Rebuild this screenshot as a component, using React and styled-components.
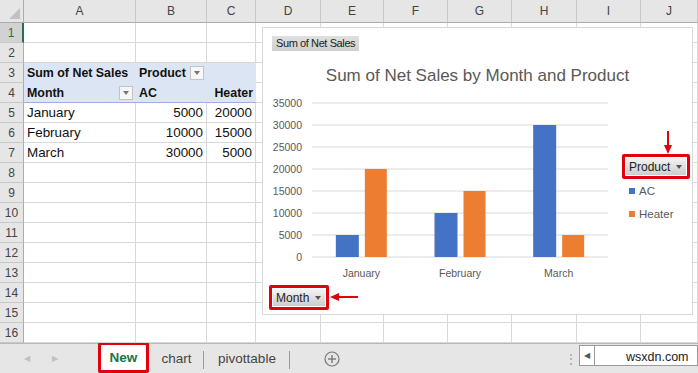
import React from "react";
import styled, { createGlobalStyle } from "styled-components";

const GlobalStyle = createGlobalStyle`
  html, body { margin: 0; padding: 0; background: #fff; }
  body { font-family: "Liberation Sans", Arial, sans-serif; overflow: hidden; }
`;

const COLS = [24, 112, 71, 49, 65, 63, 64, 64, 65, 64, 57];
const LETTERS = ["A", "B", "C", "D", "E", "F", "G", "H", "I", "J"];

const Page = styled.div`
  width: 698px;
  height: 373px;
  display: flex;
  flex-direction: column;
  overflow: hidden;
`;

const Sheet = styled.div`
  position: relative;
  display: grid;
  grid-template-columns: ${COLS.map((c) => c + "px").join(" ")};
  grid-template-rows: 23px repeat(16, 20px);
  height: 343px;
`;

const Corner = styled.div`
  background: #e6e6e6;
  border-right: 1px solid #ababab;
  border-bottom: 1px solid #ababab;
  box-sizing: border-box;
  position: relative;
  &::after {
    content: "";
    position: absolute;
    right: 3px;
    bottom: 3px;
    border-left: 11px solid transparent;
    border-bottom: 11px solid #c2c2c2;
  }
`;

const ColHead = styled.div`
  background: #e6e6e6;
  border-right: 1px solid #c8c8c8;
  border-bottom: 1px solid #ababab;
  box-sizing: border-box;
  display: flex;
  align-items: center;
  justify-content: center;
  font-size: 12px;
  color: #444;
`;

const RowHead = styled.div`
  background: ${(p) => (p.$active ? "#d2d2d2" : "#e6e6e6")};
  border-right: ${(p) => (p.$active ? "2px solid #217346" : "1px solid #ababab")};
  border-bottom: 1px solid #c8c8c8;
  box-sizing: border-box;
  display: flex;
  align-items: center;
  justify-content: center;
  font-size: 12px;
  color: ${(p) => (p.$active ? "#217346" : "#444")};
`;

const Cell = styled.div`
  box-sizing: border-box;
  border-right: ${(p) => (p.$pivot ? "none" : "1px solid #d8d8d8")};
  border-bottom: ${(p) =>
    p.$pivotEnd ? "1px solid #9bb3dc" : p.$pivot ? "none" : "1px solid #d8d8d8"};
  background: ${(p) => (p.$pivot ? "#dce5f3" : "#fff")};
  display: flex;
  align-items: center;
  justify-content: ${(p) => (p.$right ? "flex-end" : "flex-start")};
  gap: 4px;
  padding: 0 3px;
  font-size: ${(p) => (p.$bold ? "12.4px" : "13.4px")};
  font-weight: ${(p) => (p.$bold ? 700 : 400)};
  color: #111;
  white-space: nowrap;
  overflow: visible;
`;

const Spacer = styled.span`
  flex: 1;
`;

const FilterBtn = styled.span`
  width: 14px;
  height: 14px;
  box-sizing: border-box;
  border: 1px solid #c3c3c3;
  background: #f7f7f7;
  display: inline-flex;
  align-items: center;
  justify-content: center;
  &::after {
    content: "";
    border-left: 3.5px solid transparent;
    border-right: 3.5px solid transparent;
    border-top: 4px solid #777;
  }
`;

const Chart = styled.div`
  position: absolute;
  left: 262px;
  top: 27px;
  width: 431px;
  height: 288px;
  box-sizing: border-box;
  border: 1px solid #d9d9d9;
  background: #fff;
  padding: 8px 0 5px 0;
  display: flex;
  flex-direction: column;
`;

const FieldLabel = styled.div`
  align-self: flex-start;
  margin-left: 9px;
  height: 15px;
  padding: 0 4px;
  background: linear-gradient(#e0e0e0, #cfcfcf);
  font-size: 11px;
  line-height: 15px;
  color: #222;
  letter-spacing: -0.4px;
`;

const Title = styled.div`
  margin-top: 14px;
  height: 22px;
  line-height: 22px;
  text-align: center;
  font-size: 17px;
  color: #595959;
`;

const Body = styled.div`
  display: flex;
  height: 196px;
`;

const Legend = styled.div`
  margin-left: 9px;
  margin-top: 67px;
  display: flex;
  flex-direction: column;
`;

const RedBox = styled.div`
  position: relative;
  align-self: flex-start;
  border: 3px solid #e1000c;
  border-radius: 2px;
  padding: 1px;
  display: flex;
`;

const DropBtn = styled.div`
  height: 17px;
  padding: 0 4px 0 3px;
  display: flex;
  align-items: center;
  gap: 6px;
  background: linear-gradient(#f4f4f4, #cdcdcd);
  font-size: 12px;
  color: #222;
  &::after {
    content: "";
    border-left: 3.5px solid transparent;
    border-right: 3.5px solid transparent;
    border-top: 4px solid #555;
  }
`;

const LegendItem = styled.div`
  display: flex;
  align-items: center;
  gap: 4px;
  height: 23px;
  padding-left: 7px;
  font-size: 11.5px;
  color: #595959;
`;

const Swatch = styled.span`
  width: 6px;
  height: 6px;
  background: ${(p) => p.$color};
`;

const MonthRow = styled.div`
  margin-top: 2px;
  margin-left: 6px;
  display: flex;
`;

const Arrow = styled.svg`
  position: absolute;
  overflow: visible;
`;

const TabBar = styled.div`
  height: 30px;
  box-sizing: border-box;
  background: #e6e6e6;
  border-top: 1px solid #b8b8b8;
  display: flex;
  align-items: stretch;
  font-size: 13.5px;
  color: #444;
`;

const NavArrows = styled.div`
  width: 98px;
  display: flex;
  align-items: center;
  padding-left: 24px;
  gap: 22px;
  box-sizing: border-box;
  color: #c0c0c0;
  font-size: 8px;
`;

const ActiveTab = styled.div`
  width: 51px;
  margin-top: -2px;
  box-sizing: border-box;
  border: 3px solid #e1000c;
  border-radius: 2px;
  background: #fff;
  display: flex;
  align-items: center;
  justify-content: center;
  font-weight: 700;
  color: #217346;
`;

const Tab = styled.div`
  width: ${(p) => p.$w}px;
  display: flex;
  align-items: center;
  justify-content: center;
  position: relative;
  &::after {
    content: "";
    position: absolute;
    right: 0;
    top: 7px;
    bottom: 4px;
    width: 1px;
    background: #9a9a9a;
  }
`;

const AddTab = styled.div`
  width: 84px;
  display: flex;
  align-items: center;
  justify-content: center;
`;

const Dots = styled.div`
  margin-left: auto;
  width: 16px;
  display: flex;
  align-items: center;
  justify-content: center;
  color: #a8a8a8;
  font-size: 14px;
`;

const Scroll = styled.div`
  width: 119px;
  height: 21px;
  margin-top: 1px;
  box-sizing: border-box;
  border: 1px solid #9a9a9a;
  background: #fff;
  display: flex;
  overflow: hidden;
`;

const ScrollBtn = styled.div`
  width: 14px;
  border-right: 1px solid #9a9a9a;
  display: flex;
  align-items: center;
  justify-content: center;
  color: #555;
  font-size: 8px;
`;

const Watermark = styled.div`
  padding-left: 31px;
  display: flex;
  align-items: flex-end;
  font-size: 12.5px;
  line-height: 15px;
  color: #222;
`;

const DATA = {
  3: [
    { t: "Sum of Net Sales", bold: true, pivot: true },
    { t: "Product", bold: true, pivot: true, filter: true },
    { t: "", pivot: true },
  ],
  4: [
    { t: "Month", bold: true, pivot: true, end: true, filter: true, spread: true },
    { t: "AC", bold: true, pivot: true, end: true },
    { t: "Heater", bold: true, pivot: true, end: true, right: true },
  ],
  5: [{ t: "January" }, { t: "5000", right: true }, { t: "20000", right: true }],
  6: [{ t: "February" }, { t: "10000", right: true }, { t: "15000", right: true }],
  7: [{ t: "March" }, { t: "30000", right: true }, { t: "5000", right: true }],
};

const SERIES = [
  { name: "January", ac: 5000, heater: 20000 },
  { name: "February", ac: 10000, heater: 15000 },
  { name: "March", ac: 30000, heater: 5000 },
];

const PlotSvg = () => {
  const x0 = 49;
  const x1 = 345;
  const top = 16;
  const step = 22;
  const base = top + step * 7;
  const catW = (x1 - x0) / 3;
  const h = (v) => (v / 35000) * (step * 7);
  return (
    <svg width="350" height="196" viewBox="0 0 350 196">
      {[0, 1, 2, 3, 4, 5, 6, 7].map((i) => {
        const y = top + i * step;
        return (
          <g key={i}>
            <line x1={x0} x2={x1} y1={y} y2={y} stroke="#d9d9d9" strokeWidth="1" />
            <text
              x="39"
              y={y + 3.8}
              textAnchor="end"
              fontSize="10.5"
              fill="#595959"
              fontFamily="Liberation Sans, Arial, sans-serif"
            >
              {(35000 - i * 5000).toString()}
            </text>
          </g>
        );
      })}
      {SERIES.map((s, i) => {
        const cx = x0 + catW * (i + 0.5);
        return (
          <g key={s.name}>
            <rect x={cx - 25.5} y={base - h(s.ac)} width="23" height={h(s.ac)} fill="#4472c4" />
            <rect x={cx + 3.5} y={base - h(s.heater)} width="22" height={h(s.heater)} fill="#ed7d31" />
            <text
              x={cx}
              y="190"
              textAnchor="middle"
              fontSize="10.5"
              fill="#595959"
              fontFamily="Liberation Sans, Arial, sans-serif"
            >
              {s.name}
            </text>
          </g>
        );
      })}
    </svg>
  );
};

export default function App() {
  const rows = [];
  for (let r = 1; r <= 16; r++) {
    const data = DATA[r] || [];
    rows.push(
      <RowHead key={"h" + r} $active={r === 1}>
        {r}
      </RowHead>
    );
    for (let c = 0; c < 10; c++) {
      const d = data[c];
      if (d) {
        rows.push(
          <Cell
            key={r + "-" + c}
            $pivot={d.pivot}
            $pivotEnd={d.end}
            $bold={d.bold}
            $right={d.right}
          >
            {d.t}
            {d.spread && <Spacer />}
            {d.filter && <FilterBtn />}
          </Cell>
        );
      } else {
        rows.push(<Cell key={r + "-" + c} />);
      }
    }
  }

  return (
    <Page>
      <GlobalStyle />
      <Sheet>
        <Corner />
        {LETTERS.map((l) => (
          <ColHead key={l}>{l}</ColHead>
        ))}
        {rows}

        <Chart>
          <FieldLabel>Sum of Net Sales</FieldLabel>
          <Title>Sum of Net Sales by Month and Product</Title>
          <Body>
            <PlotSvg />
            <Legend>
              <RedBox>
                <Arrow style={{ left: 39, top: -26 }} width="8" height="24" viewBox="0 0 8 24">
                  <line x1="4" y1="0" x2="4" y2="17" stroke="#e1000c" strokeWidth="2" />
                  <polygon points="0,14 8,14 4,23" fill="#e1000c" />
                </Arrow>
                <DropBtn>Product</DropBtn>
              </RedBox>
              <LegendItem>
                <Swatch $color="#4472c4" />
                AC
              </LegendItem>
              <LegendItem>
                <Swatch $color="#ed7d31" />
                Heater
              </LegendItem>
            </Legend>
          </Body>
          <MonthRow>
            <RedBox>
              <DropBtn>Month</DropBtn>
              <Arrow style={{ left: 58, top: 5 }} width="28" height="8" viewBox="0 0 28 8">
                <line x1="6" y1="4" x2="28" y2="4" stroke="#e1000c" strokeWidth="2" />
                <polygon points="9,0 9,8 0,4" fill="#e1000c" />
              </Arrow>
            </RedBox>
          </MonthRow>
        </Chart>
      </Sheet>
      <TabBar>
        <NavArrows>
          <span>◀</span>
          <span>▶</span>
        </NavArrows>
        <ActiveTab>New</ActiveTab>
        <Tab $w={55}>chart</Tab>
        <Tab $w={86}>pivottable</Tab>
        <AddTab>
          <svg width="16" height="16" viewBox="0 0 16 16">
            <circle cx="8" cy="8" r="7" fill="none" stroke="#777" strokeWidth="1.2" />
            <line x1="4" y1="8" x2="12" y2="8" stroke="#777" strokeWidth="1.4" />
            <line x1="8" y1="4" x2="8" y2="12" stroke="#777" strokeWidth="1.4" />
          </svg>
        </AddTab>
        <Dots>⋮</Dots>
        <Scroll>
          <ScrollBtn>◀</ScrollBtn>
          <Watermark>wsxdn.com</Watermark>
        </Scroll>
      </TabBar>
    </Page>
  );
}
